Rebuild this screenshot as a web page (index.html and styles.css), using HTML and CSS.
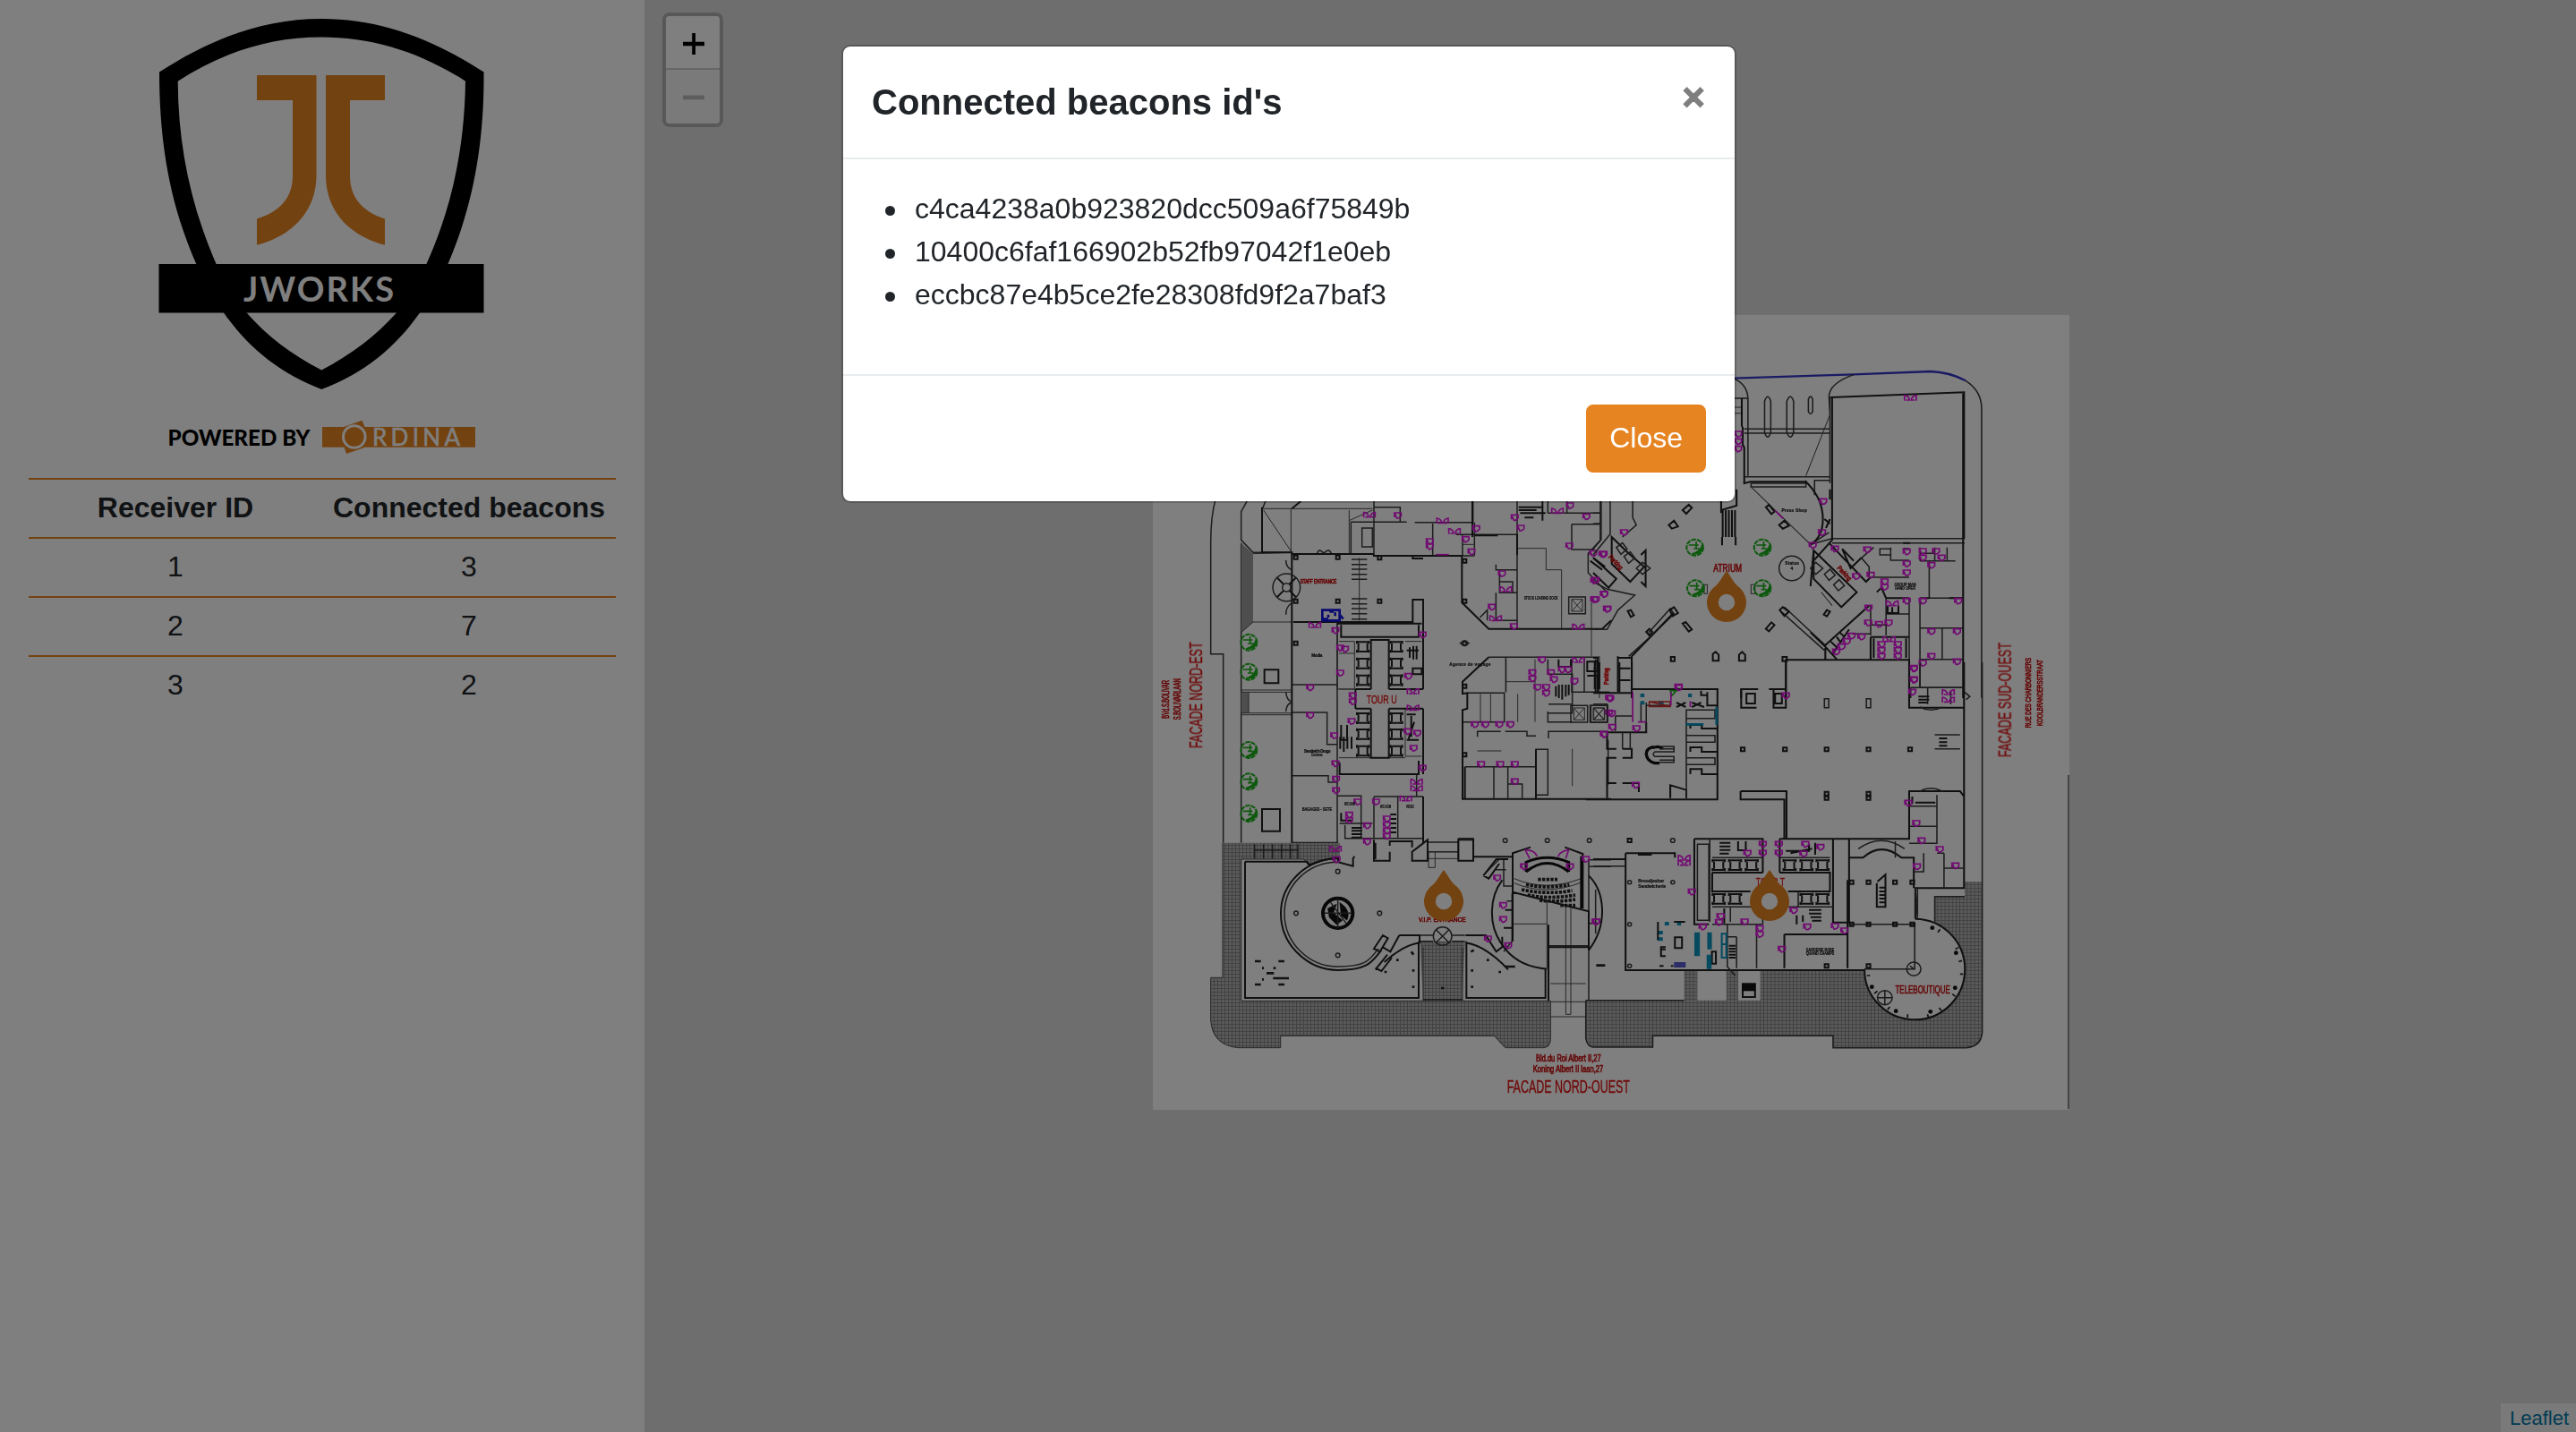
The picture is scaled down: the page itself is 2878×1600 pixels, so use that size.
FILE: index.html
```html
<!DOCTYPE html>
<html lang="en">
<head>
<meta charset="utf-8">
<title>JWorks beacons</title>
<link rel="stylesheet" href="styles.css">
</head>
<body>
<div class="app">
  <aside class="sidebar">
    <svg class="logo" viewBox="0 0 720 534" role="img" aria-label="JWorks, powered by Ordina">
      <path d="M359 21C424 21 483 43 540.500 80.600C541 160 529 229 500 296L469 349.500C442 388 407 417 359.300 435C312 417 277 388 250 349.500L219.700 296C190 229 178 160 178 80.600C236 43 294 21 359 21ZM359 41.500C302 41.500 249 58 198.700 90.700C199 165 214 232 242 296L275.600 349.500C297 374 325 396 359.300 413.500C393 396 421 374 443 349.500L476 296C505 232 519 165 520 90.700C469 58 416 41.500 359 41.500Z"/>
      <path d="M177.500 295H540.500V349.500H177.500Z"/>
      <g class="brand">
        <path d="M287 84H353.500V196C353.500 236 326 264 287 273.700V244.500C314 236 327 220 327 196V112H287Z"/>
        <path d="M430 84H364V196C364 236 391 264 430 273.700V244.500C404 236 391 220 391 196V112H430Z"/>
        <path d="M360 477H384L404.500 469.700L407.500 477H531V499.700H408L387 507L384.500 499.700H360Z"/>
      </g>
      <text class="logo-text light" x="272" y="336.500" font-size="38" textLength="168">JWORKS</text>
      <text class="logo-text heavy" x="187.500" y="498.300" font-size="24.500" textLength="159" lengthAdjust="spacingAndGlyphs">POWERED BY</text>
      <circle class="ring" cx="395.800" cy="488" r="12.300"/>
      <text class="logo-text light thin-text" x="416" y="498.300" font-size="26" textLength="98">RDINA</text>
    </svg>
    <table class="receivers">
      <thead><tr><th>Receiver ID</th><th>Connected beacons</th></tr></thead>
      <tbody>
        <tr><td>1</td><td>3</td></tr>
        <tr><td>2</td><td>7</td></tr>
        <tr><td>3</td><td>2</td></tr>
      </tbody>
    </table>
  </aside>
  <main class="map">
    <svg class="plan" viewBox="1288 352 1024 888">
      <defs>
        <pattern id="paving" width="12" height="12" patternUnits="userSpaceOnUse"><path fill="#b4b4b4" d="M0 0H12V12H0Z"/><path d="M0 1H12M1 0V12" stroke="#7e7e7e" stroke-width="3"/></pattern>
        <g id="tree"><circle r="27" fill="none" stroke="#18b018" stroke-width="6" stroke-dasharray="16 3"/><path d="M-20-8H12M-4 4H14M4-20V4M-10 22Q24 24 24-8Q18 14-10 22" fill="#18b018" stroke="#18b018" stroke-width="5"/></g>
        <path id="door" class="m" d="M-11-9H11V2Q4 11-3 9ZM-11-9V6"/>
        <g id="doors"><path class="m" d="M-19-10V10M19-10V10M-19-8Q-4-6-3 8H-14M19-8Q4-6 3 8H14"/></g>
        <path id="pod" class="h" d="M-22-16H22M-22 16H22M-20-20V-10M20-20V-10M-20 10V20M20 10V20M-15-12V12M15-12V12"/>
        <g id="lift"><path class="w" d="M-28-28H28V28H-28Z"/><path class="t" d="M-18-20H18V20H-18ZL18 20M18-20L-18 20"/></g>
        <path id="post" class="h" d="M-6-6H6V6H-6Z"/>
        <path id="marker" d="M0-35C6-27 8-22 12-18.500A22 22 0 1 1-12-18.500C-8-22-6-27 0-35ZM0-9.200A9.200 9.200 0 1 0 0 9.200A9.200 9.200 0 1 0 0-9.200Z"/>
      </defs>
      <path fill="#fff" d="M1288 352H2312V1240H1288Z"/>
      <g class="scan">
      <path d="M2311 866V1239" stroke="#888" stroke-width="2"/>

      <!-- north-east wing -->
      <g transform="translate(1280 540) scale(.33333)">
        <path class="w" d="M235 50Q218 110 218 200V572H260V1205M345 50L320 95V190L360 232H490M405 50L390 90V232M320 200V1205"/>
        <path fill="#9c9c9c" d="M320 200L360 236V465L320 500ZM320 700H345V770H320Z"/>
        <path class="t" d="M360 236L490 232M360 465H490M320 500L360 465M395 90L490 232M487 85V232M395 85H760M682 90V235M682 125L760 90M320 693H490M320 700H490M320 770H490M320 776H490M345 700V770M716 250V460M1247 218H1342V290H1394V487M1494 380V580M1208 590V700M1208 665H1305M1122 706V800M1156 706V800M1247 706V800M1305 590V800M1430 890V1015M1112 897H1192M648 530H700V690H642V470M648 570H700M648 690H700M870 530H925M870 690H930M870 755V915H925M705 920H870M648 920H705M1062 205H1100"/>
        <path class="w" d="M765 60V240M765 80H853V130M688 130V235M688 130H875M902 131H1097V60M1102 131V242M962 135V240M1040 172H1247M1245 60V487M1062 175V240M765 243H1102M1348 60V100M1348 100H1525M1412 60V100M1525 60V190L1483 235V300L1550 370M1428 137H1522M1428 137V222H1505M1174 272V290H1245M1186 290V367H1245M1186 330H1230V365M1174 367V460H1245M1120 450L1145 425V460M642 470V1205M490 675H640M490 768H608V875H640M490 980H612V1002H645M645 1048H722V1190M765 1050H930M765 1050V1190M845 1050V1190M650 1140H760M720 1190H930M908 975V1048M1150 583H1520M1207 583V700M1348 590V640H1430V770H1348M1348 765V800H1430M1428 590V700H1470M1470 583V700H1555M1112 850V832H1190M1205 832H1278V847H1308M1350 855V832H1550M1167 950V1055M1214 950V1055M1308 950H1070M1308 892H1348V1045H1308ZM1215 1008H1262V1055M1550 860V1010M1048 1190H1098V1260M1048 1190V1260M945 1203H1048M945 1235H1048M668 1145V1190H720M1350 740H1430M1078 703H1202V800H1065M725 150H760V213H725Z"/>
        <path class="h" d="M390 80V232H490V1205H645M490 237H765M1102 175H1180M765 240V243H1060V400L1150 488H1530L1560 460M495 465H895V390H930V690M640 470H925M655 475V515H915V475M930 755V975M650 935V975H915V930M815 690H930M815 755H930M703 690H755M703 755H755M755 690V525H815V690M755 755V920H815V755M703 690V755M1150 583L1062 665V705L1078 703V755L1062 760V1058H1560M1070 950V1055M1308 892V1055M770 1205V1260M930 1050V1205M398 625H445V670H398ZM390 1092H450V1166H390ZM490 85L520 60M1095 60V180M1525 60V190M1245 170V240M895 245V252H930"/>
        <path class="h" d="M1250 80H1330M1250 90H1310M1255 100H1340M1270 115H1300M1330 60V125M1384 590V615H1425V590M1375 680V715M1385 675V720M1396 675V725M1408 675V715M1418 675V710M1480 598H1515V630H1480ZM1480 645H1515V690M1508 590V700M655 810V860H675V810M652 850V890M664 850V900M676 850V890M690 850V890M875 775H905M890 780V850M875 860H915M900 800L880 860M875 560H915M885 550V585M897 545V590M908 545V590M895 620H925V640H895ZM655 1105V1130H690M690 1155H725M690 1165H725M690 1176H725M690 1187H725M820 1110H840M820 1125H840M820 1140H840M820 1155H840M820 1170H840M1490 260L1530 290M1500 250L1540 280"/>
        <path class="w" d="M690 255H742M690 272H742M690 288H742M690 305H742M690 322H742M690 387H742M690 404H742M690 420H742M690 437H742M690 455H742M575 235Q580 215 597 235Q615 215 622 235M470 258Q470 280 488 290M470 440Q470 415 488 402M470 700Q472 725 488 732M470 765Q472 740 488 735"/>
        <circle class="w" cx="472" cy="349" r="46"/><circle class="w" cx="472" cy="349" r="14"/><path class="h" d="M441 317L463 339M503 317L481 339M441 381L463 359M503 381L481 359"/>
        <use href="#post" x="503" y="248"/><use href="#post" x="644" y="248"/><use href="#post" x="784" y="250"/><use href="#post" x="503" y="395"/><use href="#post" x="644" y="395"/><use href="#post" x="784" y="395"/><use href="#post" x="503" y="536"/><use href="#post" x="1069" y="536"/><use href="#post" x="1069" y="260"/><use href="#post" x="1069" y="395"/><use href="#post" x="1069" y="910"/><use href="#post" x="1069" y="680"/><path class="w" d="M1055 536L1069 527L1083 536L1069 545Z"/>
        <use href="#pod" x="728" y="548"/><use href="#pod" x="728" y="604"/><use href="#pod" x="728" y="660"/><use href="#pod" x="840" y="548"/><use href="#pod" x="840" y="604"/><use href="#pod" x="840" y="660"/>
        <use href="#pod" x="728" y="787"/><use href="#pod" x="728" y="841"/><use href="#pod" x="728" y="897"/><use href="#pod" x="840" y="787"/><use href="#pod" x="840" y="841"/><use href="#pod" x="840" y="897"/>
        <use href="#lift" x="1446" y="409"/><use href="#lift" x="1453" y="773"/><use href="#lift" x="1520" y="773"/>
        <use href="#tree" x="346" y="533"/><use href="#tree" x="346" y="632"/><use href="#tree" x="346" y="894"/><use href="#tree" x="346" y="1000"/><use href="#tree" x="346" y="1107"/>
        <path d="M592 425H650V460H592ZM592 455H612M620 425V430H630M612 440V450M635 432V445M650 440L662 455" fill="none" stroke="#1414e0" stroke-width="8"/>
        <use href="#doors" x="750" y="105"/><use href="#door" x="845" y="108"/><use href="#doors" x="995" y="125"/><use href="#doors" x="1035" y="160"/><use href="#door" x="1108" y="152"/><use href="#door" x="952" y="195"/><use href="#door" x="952" y="212"/><use href="#door" x="1072" y="188"/><use href="#door" x="1092" y="230"/><path class="m" d="M972 239H1016"/>
        <use href="#doors" x="1380" y="92"/><use href="#door" x="1422" y="75"/><use href="#door" x="1237" y="115"/><use href="#door" x="1257" y="150"/><use href="#door" x="1477" y="112"/><use href="#door" x="1420" y="210"/><use href="#door" x="1500" y="235"/><use href="#door" x="1535" y="238"/><use href="#door" x="1503" y="327"/><use href="#door" x="1537" y="372"/><use href="#door" x="1503" y="390"/><use href="#door" x="1548" y="422"/>
        <use href="#door" x="1194" y="303"/><use href="#doors" x="1207" y="355"/><use href="#door" x="1160" y="415"/><use href="#doors" x="1173" y="452"/><use href="#door" x="1234" y="480"/><use href="#doors" x="1450" y="480"/><use href="#doors" x="567" y="475"/><use href="#door" x="636" y="494"/><use href="#door" x="928" y="508"/><use href="#door" x="652" y="552"/><use href="#door" x="668" y="556"/><use href="#door" x="652" y="636"/><use href="#door" x="880" y="647"/><use href="#doors" x="896" y="697"/><use href="#doors" x="896" y="752"/><use href="#door" x="694" y="712"/><use href="#door" x="694" y="732"/><use href="#door" x="551" y="685"/><use href="#door" x="551" y="778"/><use href="#door" x="690" y="798"/><use href="#door" x="632" y="846"/><use href="#door" x="878" y="832"/><use href="#door" x="910" y="838"/><use href="#door" x="898" y="888"/><use href="#door" x="636" y="940"/><use href="#door" x="928" y="955"/><use href="#door" x="638" y="992"/><use href="#door" x="638" y="1030"/><use href="#doors" x="908" y="1000"/><use href="#doors" x="908" y="1022"/><use href="#door" x="710" y="1068"/><use href="#door" x="772" y="1068"/><use href="#doors" x="872" y="1056"/><use href="#door" x="682" y="1112"/><use href="#door" x="682" y="1130"/><use href="#door" x="742" y="1148"/><use href="#door" x="742" y="1202"/><use href="#door" x="808" y="1125"/><use href="#door" x="808" y="1145"/><use href="#door" x="808" y="1165"/><use href="#door" x="808" y="1183"/><use href="#door" x="636" y="1225"/>
        <use href="#door" x="1328" y="592"/><use href="#doors" x="1450" y="592"/><use href="#door" x="1296" y="635"/><use href="#door" x="1296" y="655"/><use href="#door" x="1358" y="635"/><use href="#door" x="1395" y="625"/><use href="#door" x="1415" y="625"/><use href="#door" x="1368" y="658"/><use href="#door" x="1437" y="664"/><use href="#door" x="1313" y="684"/><use href="#door" x="1342" y="684"/><use href="#door" x="1342" y="704"/><use href="#door" x="1103" y="809"/><use href="#door" x="1138" y="809"/><use href="#door" x="1185" y="809"/><use href="#door" x="1222" y="809"/><use href="#door" x="1124" y="942"/><use href="#door" x="1188" y="942"/><use href="#door" x="1237" y="942"/><use href="#door" x="1237" y="1000"/><use href="#door" x="1537" y="842"/><use href="#door" x="1553" y="720"/><use href="#door" x="1553" y="770"/>
        <g class="red"><text class="bold" x="518" y="337" font-size="20" textLength="122" lengthAdjust="spacingAndGlyphs">STAFF ENTRANCE</text><text x="740" y="737" font-size="38" textLength="102" lengthAdjust="spacingAndGlyphs">TOUR U</text>
        <text transform="translate(188 888) rotate(-90)" font-size="58" textLength="356" lengthAdjust="spacingAndGlyphs">FACADE NORD-EST</text>
        <text class="bold" transform="translate(77 788) rotate(-90)" font-size="30" textLength="128" lengthAdjust="spacingAndGlyphs">BVd.S.BOLIVAR</text><text class="bold" transform="translate(116 793) rotate(-90)" font-size="30" textLength="138" lengthAdjust="spacingAndGlyphs">S.BOLIVARLAAN</text><text transform="translate(1552 675) rotate(-90)" font-size="20" textLength="56" lengthAdjust="spacingAndGlyphs">Parking</text></g>
        <g class="note"><text x="1268" y="390" textLength="114" lengthAdjust="spacingAndGlyphs">STOCK LOADING DOCK</text><text x="1018" y="612" textLength="138">Agence de voyage</text><text x="556" y="583" textLength="36">Media</text><text x="530" y="902" textLength="90">Sandwich Drugs</text><text x="555" y="916" textLength="38" lengthAdjust="spacingAndGlyphs">Cosmos</text><text x="524" y="1098" textLength="100" lengthAdjust="spacingAndGlyphs">BAGAGES - SETE</text><text x="666" y="1080" textLength="36" lengthAdjust="spacingAndGlyphs">WC DAM</text><text x="786" y="1088" textLength="36" lengthAdjust="spacingAndGlyphs">WC HOM</text><text x="873" y="1088" textLength="26" lengthAdjust="spacingAndGlyphs">VIDEO</text></g>
      </g>

      <!-- atrium and south-west wing -->
      <g transform="translate(1780 340) scale(.34439 .33333)">
        <path d="M455 248L845 235L1095 225Q1155 227 1208 256" fill="none" stroke="#3434c8" stroke-width="7"/>
        <path class="w" d="M1208 256Q1260 290 1260 350V1320M459 250Q500 270 502 315V575M459 315H502M845 236Q765 265 765 310L768 370M768 310V600M490 418H768M490 432H768M490 578H768M512 600H690V612H512ZM768 590H718V640M690 590V612M705 805L765 765M705 805L775 785H1205M775 800H1205M556 430V325Q566 295 576 325V430Q566 460 556 430ZM628 430V325Q640 295 650 325V430Q640 460 628 430ZM698 360V318Q705 300 712 318V360Q705 375 698 360ZM128 660V715L140 740L95 780M25 660V790L0 820M55 660V770L0 840M0 700H25M0 735H25M0 930L45 955L135 975L80 1025L45 1090H0M180 1100L250 1020L262 1038L190 1110L115 1180M620 1015L755 1145M610 1030L750 1160M1090 860V985H1200M1148 815V860M1060 985V1285H1200M1060 1085H1200M1132 1085V1190M1060 1190H1200M1025 985V1190M950 985V1110M900 1010V1110M900 1075H950M840 1105H900M965 815V858H1025M910 815L870 850L895 880V915H1025M930 820H965V840H930ZM1060 860H1175M1060 815V860M1108 815V860M1060 835H1108M1030 1285V1320M950 1038H1025"/>
        <path class="t" d="M510 610L705 805M768 370L690 575M459 345H480M459 365H480M360 940H370V970H360ZM525 940H512V970H525ZM740 965L775 1010M20 1320V1180M0 1220H15M80 1220H120M80 1260H120"/>
        <path class="h" d="M770 312L1203 295V785M775 310V790L710 865M1200 300V1320M482 315V410M485 410V470L490 480V600L510 595H690Q745 650 745 720Q745 780 705 805M768 620V655M765 800L885 930L900 915M750 1145L895 1010M755 1150L790 1190M753 1145V1192H1025V1290M625 1320V1192H755M125 1320V1180L260 1035M80 1180V1300M80 1185H125M15 1185V1300M0 1185H15M130 1290H405M480 1320V1290H535M570 1290H625M60 780L110 830L165 880L120 930L60 870ZM0 850L75 920L50 950L0 900M715 825L775 885L855 965L805 1015L715 920ZM155 840L170 825V945L155 930M715 825L705 945M920 965L935 950L950 985M415 690L465 675V620M415 660V700M900 1115H1025M900 1115V1190M705 1100L755 1150M1060 985H1090M1200 985H1155M1025 985H950M1025 820H1005M1005 800H1028M845 860L808 820L835 885L870 850"/>
        <path class="h" d="M420 690V780M430 690V780M440 690V780M450 690V780M460 690V780M418 780V808M462 780V808M775 1175L830 1090M790 1150L770 1130M800 1130L790 1115M815 1115L800 1100M910 1120V1185M1015 1120V1185M955 1010V1035H990V1010M970 1015V1035M750 720L768 735M755 750L768 720"/>
        <g class="w"><path d="M75 815L95 800L110 820L90 838ZM100 845L120 830L135 850L115 868ZM750 905L768 888L785 908L765 925ZM780 940L798 923L815 943L795 960ZM140 885L160 865L185 885L160 905ZM705 885L722 865L745 885L722 905Z"/><circle cx="644" cy="885" r="41"/></g>
        <path class="h" d="M290 690L310 672L320 682L302 702ZM560 680L570 672L588 695L578 703ZM290 1070L300 1065L320 1090L310 1097ZM560 1088L578 1066L588 1075L570 1096ZM748 1040L758 1025L768 1030L758 1046ZM112 1028L122 1025L132 1042L122 1048ZM245 740L262 725L275 745L255 752ZM603 740L620 725L635 742L615 752ZM248 1025L262 1015L275 1035L258 1045ZM605 1025L615 1015L635 1030L620 1045ZM172 1098L182 1088L192 1098L182 1110ZM388 1195V1172L397 1165L407 1175V1195ZM473 1195V1175L483 1165L493 1175V1195ZM252 1182H264V1196H252ZM614 1182H628V1196H614Z"/>
        <use href="#tree" x="330" y="815"/><use href="#tree" x="549" y="815"/><use href="#tree" x="332" y="952"/><use href="#tree" x="549" y="952"/>
        <use href="#doors" x="1029" y="313"/><use href="#door" x="470" y="435"/><use href="#door" x="470" y="460"/><use href="#door" x="470" y="485"/><use href="#door" x="746" y="661"/><use href="#door" x="742" y="765"/><use href="#door" x="712" y="808"/><use href="#door" x="784" y="820"/><use href="#door" x="889" y="823"/><path class="m" d="M590 692L616 718"/>
        <use href="#door" x="1017" y="830"/><use href="#door" x="1017" y="870"/><use href="#door" x="1017" y="900"/><use href="#door" x="1069" y="828"/><use href="#door" x="1069" y="850"/><use href="#door" x="1112" y="828"/><use href="#door" x="1130" y="850"/><use href="#door" x="1097" y="875"/><use href="#door" x="900" y="908"/><use href="#door" x="853" y="912"/><use href="#door" x="945" y="930"/><use href="#door" x="945" y="948"/><use href="#doors" x="970" y="1002"/><use href="#door" x="1017" y="995"/><use href="#door" x="1069" y="995"/><use href="#door" x="1184" y="995"/><use href="#door" x="893" y="1018"/><use href="#door" x="892" y="1068"/><use href="#door" x="927" y="1073"/><use href="#door" x="958" y="1068"/><use href="#door" x="1097" y="1097"/><use href="#door" x="1180" y="1097"/><use href="#door" x="870" y="1115"/><use href="#doors" x="960" y="1122"/><use href="#door" x="1097" y="1180"/><use href="#door" x="1180" y="1198"/><use href="#door" x="1069" y="1203"/><use href="#door" x="1040" y="1222"/><use href="#door" x="1040" y="1258"/><use href="#door" x="935" y="1140"/><use href="#door" x="935" y="1160"/><use href="#door" x="935" y="1180"/><use href="#door" x="988" y="1140"/><use href="#door" x="988" y="1160"/><use href="#door" x="988" y="1180"/><use href="#door" x="838" y="1112"/><use href="#door" x="822" y="1130"/><use href="#door" x="805" y="1148"/><use href="#door" x="788" y="1165"/><use href="#door" x="100" y="765"/><use href="#door" x="30" y="838"/><use href="#door" x="8" y="925"/><use href="#door" x="35" y="972"/><use href="#door" x="45" y="1022"/><use href="#door" x="8" y="990"/><use href="#door" x="277" y="1283"/>
        <g class="red"><text class="bold" x="390" y="898" font-size="36" textLength="92" lengthAdjust="spacingAndGlyphs">ATRIUM</text><text class="bold" transform="translate(48 848) rotate(48)" font-size="22" textLength="58" lengthAdjust="spacingAndGlyphs">Parking</text><text class="bold" transform="translate(790 885) rotate(48)" font-size="22" textLength="58" lengthAdjust="spacingAndGlyphs">Parking</text><text transform="translate(50 1275) rotate(-90)" font-size="20" textLength="56" lengthAdjust="spacingAndGlyphs">Parking</text></g>
        <g class="note"><text x="611" y="697" textLength="82">Press Shop</text><text x="622" y="874" textLength="46">Status</text><text x="640" y="890">4</text><text x="977" y="944" textLength="70" lengthAdjust="spacingAndGlyphs">GROUP MAN</text><text x="979" y="956" textLength="66" lengthAdjust="spacingAndGlyphs">HAND OPER</text></g>
      </g>

      <!-- V.I.P. entrance and auditorium -->
      <g transform="translate(1280 900) scale(.33333)">
        <path fill="url(#paving)" d="M258 125H650V178L545 200L530 180H320V655H1357V790Q1357 812 1335 812H1205L1168 772H452V812H310Q218 800 218 720V577H258Z"/>
        <path fill="url(#paving)" d="M920 455H1070L1060 655H930Z"/>
        <path fill="#fff" d="M645 180C535 180 453 260 453 362S540 550 645 550 780 520 800 480Z"/>
        <path class="t" d="M258 125V577H218V720Q225 805 310 812H452V772H1168L1205 812H1335Q1357 808 1357 780V655H320V180H530L545 200M945 155H1045M945 178H1045M948 155V208H970V155M1230 397H1345M1345 320V545M1408 330V700H1425V330M1357 597H1475M1357 658H1475M1357 708H1475M930 475V655M1062 475V655M1235 245Q1340 290 1460 245M1235 260Q1340 305 1460 258"/>
        <path class="w" d="M365 150H510M365 130V178M395 130V178M425 130V178M455 130V178M485 130V178M510 130V178M1200 180V270H1230M1210 320H1228M1228 295V455L1200 490M1140 225L1185 180M1170 215H1208M930 650H1062M1465 240V180M1485 182H1560M1485 205H1560M1485 180V655M1508 282V430M1485 395H1515M1345 470H1485"/>
        <path class="h" d="M333 188H540L550 200Q590 180 645 175V190L695 203V178L700 170M333 188V645H915V455M1075 455V645H1340V545M1350 400V655M850 435H918V460Q860 470 800 525M1072 435H1140L1175 490L1200 470M1072 460Q1140 470 1215 550M850 435L820 490L795 475M770 550L810 500M765 480L795 435L812 445L785 490ZM770 545L790 555L825 510M765 115V185H818V155M893 155V185H945V115ZM818 135V120H893V140M1048 115H1098V185H1048ZM1098 172H1230V160L1290 140M1405 140L1465 162V345M1230 165V455M1132 235L1175 180H1215M1132 235L1150 245L1185 195M1230 290L1485 355V485M1350 475H1485M1200 410H1230M1205 350H1228M1195 440V470"/>
        <path class="h" d="M645 178C540 178 453 260 453 362S540 552 645 552 760 520 790 485"/><path class="w" d="M645 190C545 190 465 265 465 362S545 540 645 540 750 515 780 480"/>
        <path class="h" d="M1195 250C1150 310 1150 400 1190 460Q1240 540 1345 548M1485 235C1540 290 1550 400 1485 485"/>
        <path d="M1275 222V190Q1345 160 1418 190V222M1275 222Q1345 165 1418 222" fill="none" stroke="#111" stroke-width="9"/>
        <path d="M1275 265Q1345 280 1420 265M1260 282Q1345 300 1430 285M1280 300Q1350 315 1440 300M1320 318Q1380 325 1440 315M1390 335H1440M1315 248H1380" fill="none" stroke="#222" stroke-width="11" stroke-dasharray="10 4"/>
        <path d="M1461 170V345" stroke="#111" stroke-width="10"/>
        <circle cx="644" cy="361" r="50" fill="none" stroke="#111" stroke-width="12"/><path d="M610 345L640 330L630 360L660 385L640 400L615 375ZM650 325Q690 350 675 385L655 370Z" fill="#111" stroke="#111"/><path class="w" d="M644 311V411M600 361H690M620 325L672 395"/>
        <circle class="w" cx="995" cy="438" r="31"/><path class="w" d="M973 416L1017 460M1017 416L973 460M920 435H963M920 455H963M1027 435H1070M1027 455H1070"/>
        <g class="w"><circle cx="644" cy="221" r="7"/><circle cx="504" cy="361" r="7"/><circle cx="784" cy="361" r="7"/><circle cx="644" cy="502" r="7"/><circle cx="1205" cy="117" r="7"/><circle cx="1346" cy="117" r="7"/><circle cx="1487" cy="117" r="7"/></g>
        <path d="M366 522H386M445 522H465M366 600H386M445 600H465M405 562H430M427 579H480M390 545H396M428 545H436M390 583H396M890 490L898 500M840 518H848M893 553H901M800 558H808M893 608H901M1090 490L1100 485M1143 518H1151M1090 553H1098M1183 558H1191M1090 608H1098M1205 540H1238M1510 536H1540M990 612H1000" stroke="#222" stroke-width="8"/>
        <use href="#doors" x="636" y="145"/><use href="#door" x="640" y="182"/><use href="#door" x="1178" y="243"/><use href="#door" x="1198" y="335"/><use href="#door" x="1198" y="382"/><use href="#door" x="1215" y="470"/><use href="#door" x="1147" y="447"/><use href="#door" x="1510" y="390"/><use href="#door" x="1475" y="180"/><use href="#door" x="1268" y="205"/><use href="#door" x="1422" y="205"/><path class="m" d="M1272 148L1287 178M1272 148Q1305 150 1312 170M1418 148L1408 178M1418 148Q1385 155 1382 172"/>
        <g class="red"><text class="bold" x="915" y="390" font-size="24" textLength="158" lengthAdjust="spacingAndGlyphs">V.I.P. ENTRANCE</text><text class="bold" x="1308" y="857" font-size="30" textLength="218" lengthAdjust="spacingAndGlyphs">Bld.du Roi Albert II,27</text><text class="bold" x="1298" y="895" font-size="30" textLength="236" lengthAdjust="spacingAndGlyphs">Koning Albert II laan,27</text><text x="1211" y="963" font-size="58" textLength="412" lengthAdjust="spacingAndGlyphs">FACADE NORD-OUEST</text></g>
      </g>

      <!-- south tower and teleboutique -->
      <g transform="translate(1780 740) scale(.34439 .33333)">
        <path fill="url(#paving)" d="M-24 1133H295V1035H338V1133H432V1035H470V1133H542V1030H1108V785H1205V735H1262V1240Q1262 1292 1210 1292H778V1252H193V1290H0Q-24 1285-24 1260Z"/>
        <ellipse cx="1040" cy="1028" rx="163" ry="169" fill="#fff"/><path fill="#fff" d="M830 760H1045V1028H830Z"/>
        <path class="h" d="M1045 860A163 169 0 1 1 880 1028"/><path class="w" d="M1043 880V1028H880M1262 0V735M1108 870V785H1205M-24 1133H295M-24 1133V1260Q-20 1288 0 1290H193V1252H778V1292H1210Q1258 1288 1262 1240V735"/>
        <path d="M1043 872V885M1185 955L1175 962M1200 1045H1190M1175 1120L1165 1112M1130 1168L1122 1158M1088 1190L1084 1180M1020 1192V1180M955 1165L962 1155M912 1110L922 1102M888 1050H898M1125 895L1118 905M1196 1000L1186 1003" stroke="#222" stroke-width="5"/>
        <g fill="#111"><circle cx="1100" cy="890" r="7"/><circle cx="1177" cy="974" r="7"/><circle cx="1174" cy="1091" r="7"/><circle cx="1094" cy="1171" r="7"/><circle cx="982" cy="1169" r="7"/><circle cx="904" cy="1088" r="7"/></g>
        <circle class="w" cx="1040" cy="1028" r="23"/><circle class="w" cx="946" cy="1124" r="24"/><path class="w" d="M922 1124H970M946 1100V1148M1040 1028L1028 1018"/>
        <path class="h" d="M125 0V90H403V460H-24M0 103H125M1025 0V152H1203M1203 0V757H1045V860M625 0V152H585V90M480 90H530M480 90V152H530M497 105H525V138H497ZM590 105H612V138H590ZM478 432H627V590M478 432V460H620V590M620 480V520M605 592H1025V432H1190L1203 450M328 592H550V705M328 592V878H375M605 592V705M105 640H265V655M105 640V1032H880M105 660H0M386 705H550M605 705H768V768H632M386 705V768H510M778 595V872H830V595M830 655H875Q935 600 1000 655H1040V757M825 730V1025M620 912H825M620 912V1025M47 235H172V200M45 235V290H75M95 290H125V320H95M75 320H45V455M45 405H75M95 405H148V435M315 222V210H352V222H400M315 300V285H352V300H400M315 375V358H352V375H400M250 455V412L302 428V455M250 412V455"/>
        <path class="w" d="M172 135V230M155 135V200M172 145H250M302 160H395V188H302ZM302 245H395V268H302ZM302 320H395V343H302ZM302 190V455M95 235V290M120 235V290M72 180H125M72 180V230M0 140H45V200M0 683H105M338 610H375V865H338ZM378 592V870M386 655H550M605 655H768M386 820H550M632 820H775M386 878H550M550 820V878M445 820V870M530 878V1025M1025 482H1115M1025 550H1115M1115 445V607H1025M1138 640V757M1115 640H1138M1138 690H1200M1072 640V702H1040M860 625Q935 570 1010 625M435 880V1020L460 1050M465 920V1025M435 920H465M1060 150Q1095 170 1132 150M1060 432Q1095 412 1132 432M1108 243H1190M1108 290H1190M1030 85H1200M1085 85V140M1160 95V140M1205 100L1222 115L1210 125M665 770V820M830 878H1040M1045 757L1052 860M1060 0V85M980 600V655M1052 757V850"/>
        <path class="h" d="M410 605H445M410 617H445M410 629H445M410 641H440M470 600V630H495V600M625 632H700V610M640 640L710 625M720 605V645M700 830H740M700 842H740M705 854H740M710 866H740M660 848V878M680 848V870M425 825V875M920 740V820H948V712L922 735M928 755H945M928 768H945M928 780H945M928 792H945M928 805H945M1055 115H1090M1055 125H1090M1055 135H1085M1122 255H1148M1122 268H1148M1122 280H1148M1045 470H1110M1035 450V475M440 950H462M440 960H462M440 970H462M440 980H462M440 990H462M265 922H288V958H265ZM235 955H220V985H235M385 970H398V1010H385ZM145 645H190M270 135L300 150M270 150L300 135M320 150L350 135M320 135L360 150M370 100V145H403M350 95V110H370M485 1078H525V1122H485ZM5 0V90M20 0V90M85 0V100M85 20H120M85 60H120"/>
        <path fill="#111" d="M482 1078H526V1102H482Z"/><path d="M200 285H190Q172 290 172 308Q175 332 200 338H215M200 285Q215 280 225 290" fill="none" stroke="#111" stroke-width="10"/><path class="w" d="M220 282H262V300H200Q190 308 200 316H262V335H215M215 290H260M215 328H260"/>
        <use href="#post" x="485" y="292"/><use href="#post" x="622" y="292"/><use href="#post" x="757" y="292"/><use href="#post" x="893" y="292"/><use href="#post" x="1028" y="292"/><use href="#post" x="757" y="440"/><use href="#post" x="757" y="455"/><use href="#post" x="893" y="440"/><use href="#post" x="893" y="455"/><use href="#post" x="838" y="737"/><use href="#post" x="893" y="737"/><use href="#post" x="979" y="737"/><use href="#post" x="1035" y="737"/><use href="#post" x="838" y="878"/><use href="#post" x="893" y="878"/><use href="#post" x="979" y="878"/><use href="#post" x="1035" y="878"/><use href="#post" x="757" y="1018"/><use href="#post" x="893" y="1018"/><use href="#post" x="118" y="597"/>
        <g class="w"><path d="M750 122H764V152H750ZM886 122H900V152H886Z"/><circle cx="258" cy="597" r="7"/><circle cx="118" cy="737" r="6"/><circle cx="258" cy="737" r="6"/><circle cx="118" cy="878" r="6"/><circle cx="118" cy="1018" r="6"/></g>
        <use href="#lift" x="18" y="173"/>
        <use href="#pod" x="407" y="680"/><use href="#pod" x="460" y="680"/><use href="#pod" x="514" y="680"/><use href="#pod" x="637" y="680"/><use href="#pod" x="692" y="680"/><use href="#pod" x="744" y="680"/><use href="#pod" x="407" y="793"/><use href="#pod" x="460" y="793"/><use href="#pod" x="692" y="793"/><use href="#pod" x="744" y="793"/>
        <path fill="#0c94c0" d="M328 905H346V985H328ZM370 905H385V962H370ZM368 980H384V1028H368ZM153 105H166V117H153ZM153 130H166V142H153ZM308 105H320V117H308ZM212 130H228V142H212ZM300 204H358V212H300ZM396 150H404V210H396ZM232 870H246V882H232ZM272 870H285V882H272ZM208 900H226V912H208ZM208 922H226V934H208Z"/><path d="M417 910H432V990H417ZM417 945H432" fill="none" stroke="#0c94c0" stroke-width="6"/><path d="M250 95H270L255 112Z" fill="none" stroke="#18b018" stroke-width="5"/><path d="M182 132H250V148H182ZL250 148" fill="none" stroke="#d03030" stroke-width="5"/><path fill="#5a5ad0" d="M262 1005H300V1023H262Z"/><path d="M262 870H298M218 962H235M215 1018H228M252 1018H260M210 870V930" stroke="#222" stroke-width="6"/>
        <use href="#door" x="277" y="85"/><use href="#door" x="55" y="122"/><use href="#door" x="60" y="172"/><use href="#door" x="62" y="218"/><use href="#door" x="35" y="242"/><use href="#door" x="140" y="222"/><use href="#door" x="138" y="412"/><use href="#door" x="1040" y="20"/><use href="#door" x="1040" y="60"/><use href="#door" x="1035" y="100"/><use href="#doors" x="1152" y="100"/><use href="#doors" x="1152" y="125"/><use href="#doors" x="295" y="655"/><use href="#doors" x="295" y="672"/><use href="#door" x="550" y="610"/><use href="#door" x="550" y="640"/><use href="#door" x="500" y="640"/><use href="#door" x="602" y="610"/><use href="#door" x="602" y="640"/><use href="#door" x="688" y="610"/><use href="#door" x="682" y="642"/><use href="#door" x="737" y="620"/><use href="#door" x="320" y="770"/><use href="#door" x="355" y="887"/><use href="#door" x="413" y="852"/><use href="#door" x="408" y="872"/><use href="#door" x="491" y="870"/><use href="#door" x="540" y="892"/><use href="#door" x="540" y="912"/><use href="#door" x="650" y="832"/><use href="#door" x="694" y="887"/><use href="#door" x="784" y="885"/><use href="#door" x="815" y="900"/><use href="#door" x="612" y="962"/><use href="#door" x="1048" y="540"/><use href="#door" x="1065" y="598"/><use href="#door" x="1124" y="627"/><use href="#door" x="1175" y="682"/><use href="#door" x="1050" y="685"/><use href="#door" x="8" y="870"/><use href="#door" x="625" y="112"/><use href="#door" x="1022" y="472"/>
        <path class="m" d="M128 100V200M252 100V145M315 130V150M145 200H172"/>
        <g class="red"><text class="bold" x="980" y="1109" font-size="38" textLength="178" lengthAdjust="spacingAndGlyphs">TELEBOUTIQUE</text><text x="528" y="750" font-size="38" textLength="94" lengthAdjust="spacingAndGlyphs">TOUR T</text>
        <text transform="translate(1355 318) rotate(-90)" font-size="58" textLength="384" lengthAdjust="spacingAndGlyphs">FACADE SUD-OUEST</text><text class="bold" transform="translate(1421 220) rotate(-90)" font-size="29" textLength="235" lengthAdjust="spacingAndGlyphs">RUE DES CHARBONNIERS</text><text class="bold" transform="translate(1459 213) rotate(-90)" font-size="29" textLength="222" lengthAdjust="spacingAndGlyphs">KOOLBRANDERSSTRAAT</text></g>
        <g class="note"><text x="146" y="738" textLength="84">Broodjesbar</text><text x="146" y="756" textLength="90">Sandwicherie</text><text x="690" y="968" textLength="92" lengthAdjust="spacingAndGlyphs">GARDERIE ROBE</text><text x="690" y="980" textLength="92" lengthAdjust="spacingAndGlyphs">QUAND CHAMPS</text></g>
      </g>
      </g>
      <g class="brand"><use href="#marker" x="1929" y="673"/><use href="#marker" x="1613" y="1007"/><use href="#marker" x="1977" y="1007"/></g>
    </svg>
    <div class="zoom">
      <button class="zoom-btn" aria-label="Zoom in"><svg viewBox="0 0 24 24"><path d="M0 9.800H24V14.200H0ZM10.200 0H14V24H10.200Z"/></svg></button>
      <button class="zoom-btn off" aria-label="Zoom out"><svg viewBox="0 0 24 24"><path d="M0 9.500H24V14.300H0Z"/></svg></button>
    </div>
    <div class="attribution">Leaflet</div>
  </main>
</div>
<div class="backdrop">
  <section class="modal" role="dialog">
    <header class="modal-header"><h5>Connected beacons id's</h5><button class="dismiss" aria-label="Close">×</button></header>
    <div class="modal-body">
      <ul>
        <li>c4ca4238a0b923820dcc509a6f75849b</li>
        <li>10400c6faf166902b52fb97042f1e0eb</li>
        <li>eccbc87e4b5ce2fe28308fd9f2a7baf3</li>
      </ul>
    </div>
    <footer class="modal-footer"><button class="close-btn">Close</button></footer>
  </section>
</div>
</body>
</html>
```
FILE: styles.css
```css
* { box-sizing: border-box; }
body { margin: 0; height: 1600px; overflow: hidden; background: #fff; color: #212529; font: 32px/1.5 "Liberation Sans", Arial, sans-serif; }
button { font-family: inherit; }
.app { display: flex; height: 1600px; }

.sidebar { width: 720px; flex: none; background: #fff; }
.logo { display: block; width: 720px; height: 534px; }
.brand { fill: #e78422; }
.logo-text { font-family: Lato, sans-serif; font-weight: 700; fill: #000; }
.logo-text.light { fill: #fff; }
.logo-text.heavy { font-weight: 900; }
.logo-text.thin-text { font-weight: 400; stroke: #fff; stroke-width: .5; }
.ring { fill: none; stroke: #fff; stroke-width: 3; }
.receivers { width: 656px; margin-left: 32px; border-collapse: separate; border-spacing: 0; table-layout: fixed; text-align: center; }
.receivers th, .receivers td { height: 66px; padding: 7px 0 9px; border-top: 2px solid #e78422; }

.map { position: relative; flex: 1; background: #ddd; }
.plan { display: block; width: 1024px; height: 888px; margin: 352px 0 0 568px; }
.scan { filter: blur(.7px); }
.w, .t, .h, .m { fill: none; }
.w { stroke: #383838; stroke-width: 4.500; }
.t { stroke: #4c4c4c; stroke-width: 3; }
.h { stroke: #202020; stroke-width: 6; }
.m { stroke: #e414e4; stroke-width: 5; }
.red { fill: #e01818; stroke: #e01818; stroke-width: 1.2; }
.red .bold { fill: #c81010; stroke: #c81010; stroke-width: 2; }
.note { fill: #111; stroke: #111; stroke-width: .6; font-size: 14px; font-weight: 700; }

.zoom { position: absolute; left: 20px; top: 14px; width: 68px; border: 4px solid rgba(0, 0, 0, .2); border-radius: 8px; background-clip: padding-box; overflow: hidden; }
.zoom-btn { display: flex; align-items: center; justify-content: center; width: 60px; height: 60px; padding: 0 0 0 2px; border: 0; border-bottom: 2px solid #ccc; background: #fff; }
.zoom-btn svg { width: 24px; height: 24px; margin-top: 3px; }
.zoom-btn.off { border-bottom: 0; background: #f4f4f4; fill: #bbb; }
.zoom-btn.off svg { margin-top: 1px; }
.attribution { position: absolute; right: 0; bottom: 0; height: 32px; padding: 0 8px 0 10px; background: rgba(255, 255, 255, .7); color: #0078a8; font-size: 22px; line-height: 33px; }

.backdrop { position: absolute; inset: 0; display: flex; align-items: flex-start; justify-content: center; padding-top: 50px; background: rgba(0, 0, 0, .5); }
.modal { width: 1000px; margin-left: 2px; border: 2px solid rgba(0, 0, 0, .2); border-radius: 10px; background: #fff; background-clip: padding-box; }
.modal-header { display: flex; justify-content: space-between; align-items: flex-start; height: 126px; padding: 32px; border-bottom: 2px solid #e9ecef; }
.modal-header h5 { margin: 0; font-size: 40px; line-height: 60px; }
.dismiss { width: 28px; padding: 0; border: 0; background: none; color: #000; font-size: 43px; font-weight: 700; line-height: 48px; opacity: .5; -webkit-text-stroke: 1.5px #000; }
.modal-body { height: 240px; padding: 31px 32px 33px; }
.modal-body ul { margin: 0; padding-left: 48px; list-style: none; }
.modal-body li { display: flex; align-items: center; }
.modal-body li::before { content: ""; width: 11px; height: 11px; margin: 5px 22px 0 -33px; border-radius: 50%; background: #212529; }
.modal-footer { display: flex; justify-content: flex-end; padding: 32px; border-top: 2px solid #e9ecef; }
.close-btn { height: 76px; padding: 0 24px 2px; border: 2px solid #e78422; border-radius: 8px; background: #e78422; color: #fff; font-size: 32px; line-height: 48px; }
```
